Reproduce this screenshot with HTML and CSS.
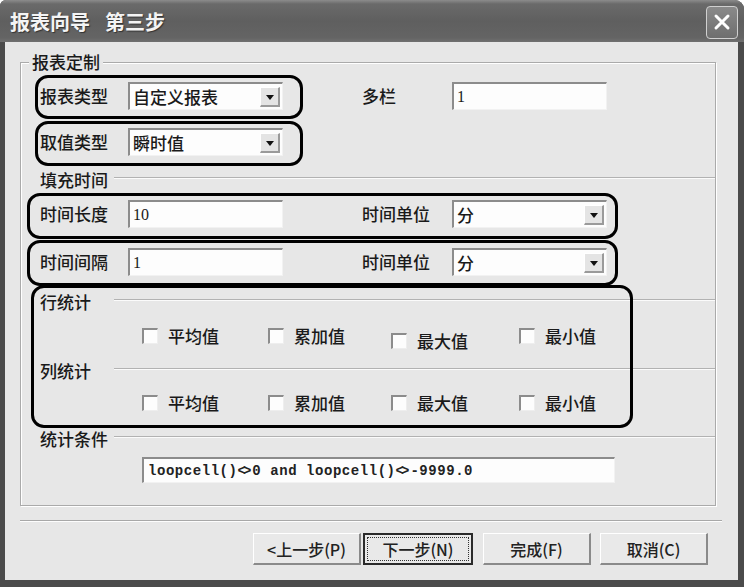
FILE: index.html
```html
<!DOCTYPE html>
<html lang="zh-CN">
<head>
  <meta charset="UTF-8">
  <title>报表向导 第三步</title>
  <link rel="stylesheet" href="styles.css">
</head>
<body>
  <div class="dialog">
    <!-- Title bar -->
    <div class="titlebar">
      <span class="title">报表向导</span>
      <span class="title">第三步</span>
      <span class="close">
        <svg width="18" height="18" viewBox="0 0 18 18"><path d="M3 3 L15 15 M15 3 L3 15" stroke="#fff" stroke-width="3" stroke-linecap="round"/></svg>
      </span>
    </div>

    <div class="client">
      <div class="group">
        <div class="group-title">报表定制</div>

        <div class="row r1">
          <span class="lbl">报表类型</span>
          <div class="field select"><span class="val">自定义报表</span><span class="drop"></span></div>
          <span class="lbl lbl2 short">多栏</span>
          <div class="field">1</div>
        </div>

        <div class="row r2">
          <span class="lbl">取值类型</span>
          <div class="field select"><span class="val">瞬时值</span><span class="drop"></span></div>
        </div>

        <div class="section s1"><span class="sec-text">填充时间</span><span class="sec-line"></span></div>

        <div class="row r3">
          <span class="lbl">时间长度</span>
          <div class="field">10</div>
          <span class="lbl lbl2">时间单位</span>
          <div class="field select"><span class="val">分</span><span class="drop"></span></div>
        </div>

        <div class="row r4">
          <span class="lbl">时间间隔</span>
          <div class="field">1</div>
          <span class="lbl lbl2">时间单位</span>
          <div class="field select"><span class="val">分</span><span class="drop"></span></div>
        </div>

        <div class="section s2"><span class="sec-text">行统计</span><span class="sec-line"></span></div>
        <div class="checks c1">
          <label class="check"><span class="cb"></span>平均值</label>
          <label class="check"><span class="cb"></span>累加值</label>
          <label class="check low"><span class="cb"></span>最大值</label>
          <label class="check"><span class="cb"></span>最小值</label>
        </div>

        <div class="section s3"><span class="sec-text">列统计</span><span class="sec-line"></span></div>
        <div class="checks c2">
          <label class="check"><span class="cb"></span>平均值</label>
          <label class="check"><span class="cb"></span>累加值</label>
          <label class="check"><span class="cb"></span>最大值</label>
          <label class="check"><span class="cb"></span>最小值</label>
        </div>

        <div class="section s4"><span class="sec-text">统计条件</span><span class="sec-line"></span></div>
        <div class="field cond">loopcell()<span class="ne">&lt;&gt;</span>0 and loopcell()<span class="ne">&lt;&gt;</span>-9999.0</div>
      </div>

      <div class="separator"></div>

      <div class="buttons">
        <button class="btn prev">&lt;上一步(P)</button>
        <button class="btn next"><span class="focus">下一步(N)</span></button>
        <button class="btn">完成(F)</button>
        <button class="btn">取消(C)</button>
      </div>
    </div>

    <!-- annotation outlines drawn over the screenshot -->
    <div class="mark m1"></div>
    <div class="mark m2"></div>
    <div class="mark m3"></div>
    <div class="mark m4"></div>
    <div class="mark m5"></div>
  </div>
</body>
</html>
```

FILE: styles.css
```css
body {
  margin: 0;
  background: #fff;
  font-family: "Noto Sans CJK SC", "Noto Sans", sans-serif;
  font-weight: 500;
  color: #1a1a1a;
}

.dialog {
  position: relative;
  width: 744px;
  height: 587px;
  background: #4b4b4b;
  border-radius: 6px 9px 0 0;
  overflow: hidden;
}

/* Title bar */
.titlebar {
  height: 42px;
  display: flex;
  align-items: center;
  padding-left: 10px;
  background: linear-gradient(#8c8c8c 0, #6a6a6a 4px, #5f5f5f 50%, #646464 90%, #707070 100%);
  box-sizing: border-box;
}
.title {
  font-size: 20px;
  font-weight: 700;
  color: #f4f4f4;
  text-shadow: 1px 1px 1px #333;
  margin-right: 15px;
  line-height: 20px;
  margin-top: 2px;
}
.close {
  margin-left: auto;
  margin-right: 6px;
  width: 30px;
  height: 31px;
  border: 1px solid #d0d0d0;
  border-radius: 4px;
  background: linear-gradient(#8a8a8a, #6e6e6e);
  display: flex;
  align-items: center;
  justify-content: center;
  margin-top: 2px;
}

/* Client area */
.client {
  margin: 0 6px 0 5px;
  height: 538px;
  background: #e7e7e7;
  padding-top: 20px;
  box-sizing: border-box;
}

.group {
  margin-left: 15px;
  width: 696px;
  height: 444px;
  border: 1px solid #aaa;
  box-shadow: 1px 1px 0 #fff, inset 1px 1px 0 #fff;
  box-sizing: border-box;
  padding-left: 19px;
}
.group-title {
  margin: -11px 0 0 -11px;
  padding: 0 3px;
  width: fit-content;
  background: #e7e7e7;
  font-size: 17px;
  line-height: 20px;
}

.row {
  display: flex;
  align-items: center;
  height: 28px;
}
.r1 { margin-top: 10px; }
.r2 { margin-top: 18px; }
.r3 { margin-top: 10px; }
.r4 { margin-top: 20px; }

.lbl {
  width: 88px;
  font-size: 17px;
  line-height: 20px;
  flex: none;
}
.lbl2 {
  margin-left: 79px;
  width: 90px;
}

.field {
  width: 155px;
  height: 28px;
  box-sizing: border-box;
  background: #fdfdfd;
  border-top: 2px solid #8c8c8c;
  border-left: 2px solid #8c8c8c;
  border-right: 1px solid #f2f2f2;
  border-bottom: 1px solid #f2f2f2;
  font-family: "Liberation Serif", "Noto Sans CJK SC", serif;
  font-size: 16px;
  line-height: 24px;
  padding-left: 3px;
  display: flex;
  align-items: center;
}
.select .val {
  font-family: "Noto Sans CJK SC", sans-serif;
  font-size: 17px;
  flex: 1;
}
.drop {
  width: 20px;
  height: 20px;
  margin-right: 2px;
  box-sizing: border-box;
  background: #e4e4e4;
  border-top: 1px solid #fff;
  border-left: 1px solid #fff;
  border-right: 2px solid #9a9a9a;
  border-bottom: 2px solid #9a9a9a;
  position: relative;
}
.drop::after {
  content: "";
  position: absolute;
  left: 5px;
  top: 7px;
  border-left: 4px solid transparent;
  border-right: 4px solid transparent;
  border-top: 5px solid #111;
}

/* Section headings with etched line */
.section {
  display: flex;
  align-items: center;
  height: 20px;
}
.s1 { margin-top: 14px; }
.s2 { margin-top: 16px; }
.s3 { margin-top: 13px; }
.s4 { margin-top: 14px; }
.sec-text {
  width: 74px;
  font-size: 17px;
  line-height: 20px;
  flex: none;
}
.sec-line {
  flex: 1;
  height: 0;
  border-top: 1px solid #b2b2b2;
  border-bottom: 1px solid #fbfbfb;
  margin-top: -4px;
}

/* Checkboxes */
.checks {
  display: grid;
  grid-template-columns: 126px 123px 128px auto;
  grid-template-rows: 24px;
  margin-left: 102px;
  align-items: center;
}
.c1 { margin-top: 12px; }
.c2 { margin-top: 10px; }
.check {
  display: flex;
  align-items: center;
  font-size: 17px;
  line-height: 20px;
}
.check.low { transform: translateY(5px); }
.cb {
  width: 16px;
  height: 16px;
  box-sizing: border-box;
  background: #fdfdfd;
  border-top: 2px solid #8c8c8c;
  border-left: 2px solid #8c8c8c;
  border-right: 1px solid #eee;
  border-bottom: 1px solid #eee;
  margin-right: 10px;
}

.cond {
  margin: 8px 0 0 102px;
  width: 473px;
  height: 26px;
  font-family: "Liberation Mono", monospace;
  font-weight: 700;
  font-size: 14px;
  letter-spacing: 0.55px;
  padding-left: 4px;
  color: #222;
}
.ne { letter-spacing: -3px; margin-right: 4px; }

/* Bottom separator and buttons */
.separator {
  margin: 14px 0 0 15px;
  width: 702px;
  border-top: 1px solid #a8a8a8;
  border-bottom: 1px solid #fdfdfd;
}
.buttons {
  display: flex;
  margin: 11px 0 0 248px;
}
.btn {
  width: 108px;
  height: 32px;
  margin-right: 9px;
  background: #e9e9e9;
  border-top: 1px solid #fff;
  border-left: 1px solid #fff;
  border-right: 2px solid #8a8a8a;
  border-bottom: 2px solid #8a8a8a;
  font-family: "Noto Sans CJK SC", sans-serif;
  font-weight: 500;
  font-size: 16px;
  color: #222;
  padding: 0;
  display: flex;
  align-items: center;
  justify-content: center;
}
.btn.prev { margin-right: 2px; }
.btn.next {
  width: 110px;
  border: 2px solid #2a2a2a;
  padding: 2px;
  margin-right: 10px;
}
.focus {
  flex: 1;
  align-self: stretch;
  display: flex;
  align-items: center;
  justify-content: center;
  border: 1px dotted #333;
}

/* Annotation outlines */
.mark {
  position: absolute;
  border: 3px solid #000;
  border-radius: 13px;
  box-sizing: border-box;
}
.m1 { left: 35px; top: 75px; width: 268px; height: 44px; }
.m2 { left: 35px; top: 121px; width: 268px; height: 45px; }
.m3 { left: 27px; top: 193px; width: 591px; height: 46px; }
.m4 { left: 27px; top: 240px; width: 591px; height: 46px; }
.m5 { left: 31px; top: 285px; width: 602px; height: 143px; }
```
